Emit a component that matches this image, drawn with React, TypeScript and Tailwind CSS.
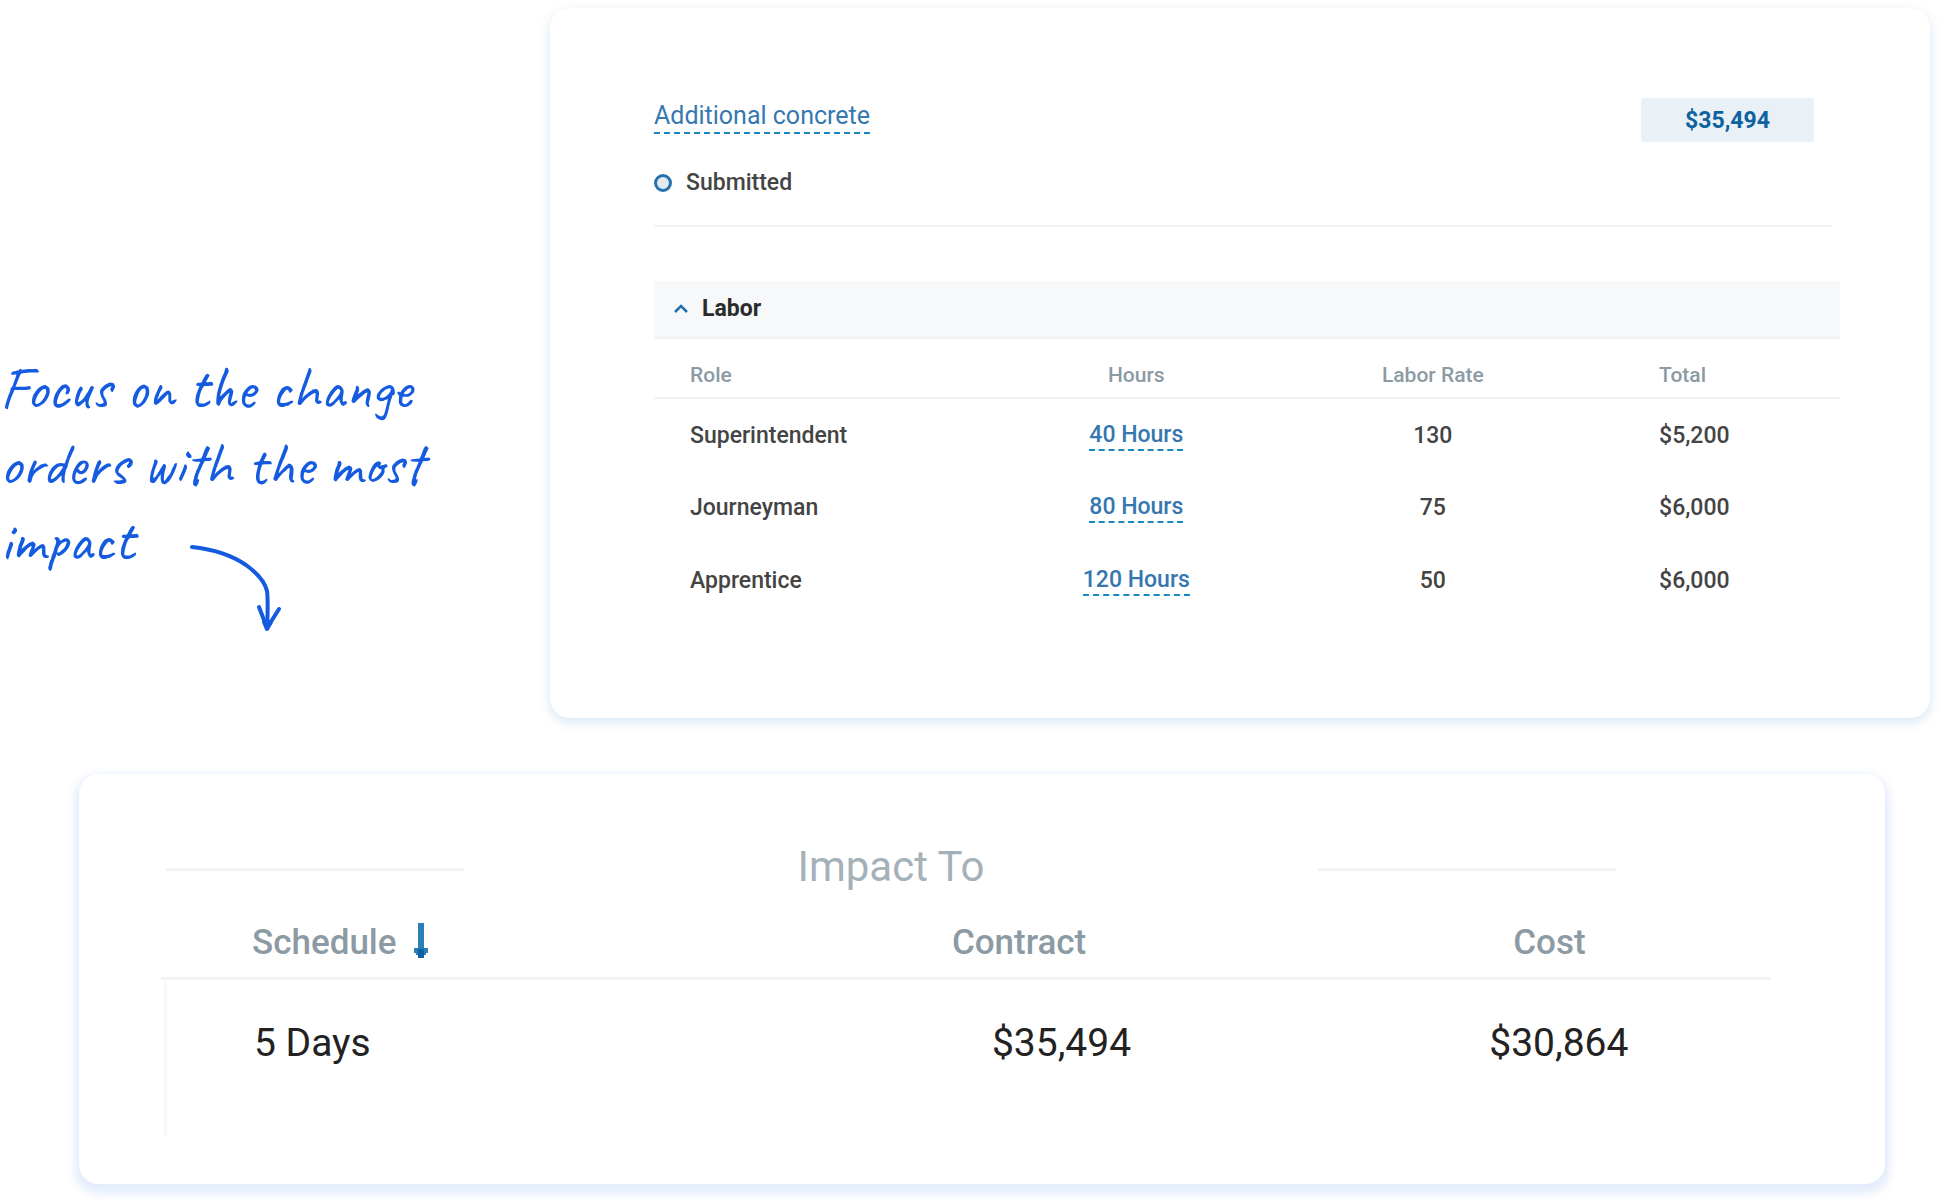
import { useState } from "react";
import clsx from "clsx";

interface LaborLine {
  role: string;
  hours: number;
  rate: number;
  total: string;
}

const LABOR_LINES: LaborLine[] = [
  { role: "Superintendent", hours: 40, rate: 130, total: "$5,200" },
  { role: "Journeyman", hours: 80, rate: 75, total: "$6,000" },
  { role: "Apprentice", hours: 120, rate: 50, total: "$6,000" },
];

function EditableLink({ children, className }: { children: React.ReactNode; className?: string }) {
  return (
    <a href="#" className={clsx("inline-block border-b-2 border-dashed border-[#158ac4] pt-0.5 text-[#3677b0]", className)}>
      {children}
    </a>
  );
}

function Caption() {
  return (
    <div className="w-[550px] shrink-0 pt-[342px] text-[#155be0]">
      <p className="font-['Caveat','Lato',cursive] text-[60px] leading-[76px] font-medium whitespace-nowrap">
        Focus on the change
        <br />
        orders with the most
        <br />
        impact
      </p>
      <svg
        className="-mt-9 ml-[188px]"
        width="96"
        height="92"
        viewBox="0 0 96 92"
        fill="none"
        stroke="currentColor"
        strokeWidth="4"
        strokeLinecap="round"
        strokeLinejoin="round"
        aria-hidden="true"
      >
        <path d="M4 5C23 7 42 12 58 23C69 31 77 40 79 49C80 57 80 66 79 86" />
        <path d="M71 65L79 86L91 67" />
        <path d="M76 80L79 87L83 80Z" fill="currentColor" />
      </svg>
    </div>
  );
}

function ChangeOrderCard() {
  const [open, setOpen] = useState(true);

  return (
    <section className="min-h-[710px] flex-1 rounded-[20px] bg-white pt-[90px] pr-[90px] pb-24 pl-[104px] shadow-[0_4px_12px_rgba(30,115,185,0.18)]">
      <div className="mr-2 border-b-2 border-[#f1f3f7] pb-[27px]">
        <div className="flex items-start justify-between">
          <EditableLink className="text-[25px] leading-[32px]">Additional concrete</EditableLink>
          <span className="mr-[18px] w-[173px] rounded-[3px] bg-[#e9f0f6] pt-0.5 text-center text-[23px] leading-[42px] font-bold text-[#0f62a0]">
            $35,494
          </span>
        </div>
        <div className="mt-[26px] flex items-center gap-[14px] text-[23px] leading-[30px] font-medium text-[#444]">
          <span className="h-[18px] w-[18px] rounded-full border-[3px] border-[#2a72ab] bg-[#e3ebf2]" />
          Submitted
        </div>
      </div>

      <button
        type="button"
        aria-expanded={open}
        onClick={() => setOpen(!open)}
        className="mt-[54px] flex h-[58px] w-full items-center gap-[14px] border-b-2 border-[#eff1f5] bg-[#f6f8fa] pl-5 text-[23px] font-bold text-[#2b2b2b]"
      >
        <svg
          className={clsx(!open && "rotate-180")}
          width="14"
          height="10"
          viewBox="0 0 14 10"
          fill="none"
          stroke="#1e6fae"
          strokeWidth="2.5"
          aria-hidden="true"
        >
          <path d="M1 8L7 2L13 8" />
        </svg>
        Labor
      </button>

      {open && (
        <table className="w-full table-fixed text-[23px] font-medium text-[#444]">
          <thead>
            <tr className="h-[59px] border-b-2 border-[#f1f2f7] text-[21px] text-[#8c9aa4]">
              <th className="w-[28%] pt-4 pl-9 text-left font-medium">Role</th>
              <th className="w-[25%] pt-4 pl-1 font-medium">Hours</th>
              <th className="w-[25%] pt-4 pl-1 font-medium">Labor Rate</th>
              <th className="w-[22%] pt-4 pl-20 text-left font-medium">Total</th>
            </tr>
          </thead>
          <tbody>
            {LABOR_LINES.map((line) => (
              <tr key={line.role} className="h-[73px]">
                <td className="pt-0.5 pl-9">{line.role}</td>
                <td className="pl-1 text-center">
                  <EditableLink className="leading-[28px]">{line.hours} Hours</EditableLink>
                </td>
                <td className="pt-0.5 pl-1 text-center">{line.rate}</td>
                <td className="pt-0.5 pl-20">{line.total}</td>
              </tr>
            ))}
          </tbody>
        </table>
      )}
    </section>
  );
}

function ImpactCard() {
  return (
    <section className="mt-14 mr-[57px] ml-[79px] rounded-[20px] bg-white pt-[67px] pr-[114px] pb-12 pl-[82px] shadow-[0_5px_8px_5px_rgba(21,91,227,0.11)]">
      <div className="mr-[155px] ml-[5px] flex items-center justify-between">
        <div className="h-[3px] w-[298px] bg-[#f1f3f7]" />
        <h2 className="pb-1 text-[42px] leading-[52px] text-[#a5b1b9]">Impact To</h2>
        <div className="h-[3px] w-[298px] bg-[#f1f3f7]" />
      </div>

      <table className="w-full table-fixed">
        <thead>
          <tr className="h-[81px] border-b-[3px] border-[#f1f3f7] text-left text-[35px] text-[#8c9aa4]">
            <th className="w-[49%] pt-3 pl-[91px] font-medium">
              <button type="button" className="flex items-center gap-4">
                Schedule
                <svg className="mb-1" width="16" height="36" viewBox="0 0 16 36" aria-hidden="true">
                  <path d="M5 0h6v25H5z" fill="#2b7fb6" />
                  <path d="M1 25h14v5h-2v2H3v-2H1z" fill="#2b7fb6" />
                  <path d="M5 26h6v9H5z" fill="#0b62a3" />
                </svg>
              </button>
            </th>
            <th className="w-[33.5%] pt-3 pl-0.5 font-medium">Contract</th>
            <th className="w-[17.5%] pt-3 pl-6 font-medium">Cost</th>
          </tr>
        </thead>
        <tbody>
          <tr className="align-top text-[39px] leading-[56px] text-[#222]">
            <td>
              <div className="ml-[3px] h-[156px] border-l-[3px] border-[#f8f9fc] pt-[35px] pl-[87px]">5 Days</div>
            </td>
            <td className="pt-[35px] pl-[42px]">$35,494</td>
            <td className="pt-[35px]">$30,864</td>
          </tr>
        </tbody>
      </table>
    </section>
  );
}

export default function App() {
  return (
    <main className="min-h-screen bg-white pt-2 pb-5 font-['Roboto',sans-serif]">
      <div className="flex items-start pr-3">
        <Caption />
        <ChangeOrderCard />
      </div>
      <ImpactCard />
    </main>
  );
}
